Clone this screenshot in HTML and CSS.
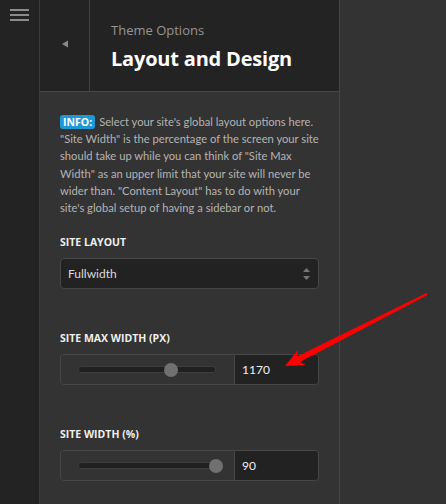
FILE: index.html
```html
<!DOCTYPE html>
<html lang="en">
<head>
<meta charset="utf-8">
<title>Theme Options – Layout and Design</title>
<link rel="stylesheet" href="styles.css">
</head>
<body>
<div class="app">
  <aside class="rail">
    <button class="menu" aria-label="Menu"><span></span><span></span><span></span></button>
  </aside>

  <section class="panel">
    <header class="panel-head">
      <button class="back" aria-label="Back">
        <svg width="8" height="8" viewBox="0 0 8 8"><path d="M7 0.5 L7 7.5 L1 4 Z" fill="#8a8a8a"/></svg>
      </button>
      <div class="titles">
        <div class="eyebrow">Theme Options</div>
        <h1>Layout and Design</h1>
      </div>
    </header>

    <div class="panel-body">
      <div class="info">
        <span class="badge">INFO:</span>
        <p class="info-text">Select your site's global layout options here. "Site Width" is the percentage of the screen your site should take up while you can think of "Site Max Width" as an upper limit that your site will never be wider than. "Content Layout" has to do with your site's global setup of having a sidebar or not.</p>
      </div>

      <div class="field">
        <div class="label">Site Layout</div>
        <div class="select">
          <span>Fullwidth</span>
          <svg width="9" height="14" viewBox="0 0 9 14"><path d="M4.5 1 L8 5 L1 5 Z M1 9 L8 9 L4.5 13 Z" fill="#767676"/></svg>
        </div>
      </div>

      <div class="field">
        <div class="label">Site Max Width (px)</div>
        <div class="range">
          <div class="slider">
            <div class="track"><div class="thumb" style="left: 67.4%"></div></div>
          </div>
          <div class="value">1170</div>
        </div>
      </div>

      <div class="field">
        <div class="label">Site Width (%)</div>
        <div class="range">
          <div class="slider">
            <div class="track"><div class="thumb" style="left: 100%"></div></div>
          </div>
          <div class="value">90</div>
        </div>
      </div>
    </div>
  </section>

  <div class="canvas"></div>
</div>

<svg class="pointer" width="446" height="504" viewBox="0 0 446 504">
  <polygon points="285,366 298.1,349.8 297.0,356.4 426.5,293.1 427.5,294.9 299.9,361.9 305.8,365" fill="#ff0000"/>
</svg>
</body>
</html>
```

FILE: styles.css
```css
* { box-sizing: border-box; }

html, body {
  margin: 0;
  height: 100%;
  background: #333333;
}

body {
  font-family: "Open Sans", "Noto Sans", sans-serif;
  color: #b4b4b4;
  overflow: hidden;
}

.app {
  display: flex;
  height: 504px;
}

/* left icon rail */
.rail {
  width: 40px;
  flex: none;
  background: #232323;
  border-right: 1px solid #3a3a3a;
}

.menu {
  display: flex;
  flex-direction: column;
  gap: 3px;
  width: 40px;
  padding: 9px 10px 0 10px;
  margin: 0;
  border: 0;
  background: none;
}

.menu span {
  display: block;
  width: 19px;
  height: 2px;
  background: #8c8c8c;
}

/* options panel */
.panel {
  width: 300px;
  flex: none;
  display: flex;
  flex-direction: column;
  background: #333333;
  border-right: 1px solid #454545;
}

.panel-head {
  display: flex;
  height: 92px;
  flex: none;
  background: #232323;
  border-bottom: 1px solid #474747;
}

.back {
  width: 50px;
  flex: none;
  display: flex;
  align-items: center;
  justify-content: center;
  padding: 0 0 3px 0;
  margin: 0;
  border: 0;
  border-right: 1px solid #3f3f3f;
  background: none;
}

.titles {
  padding: 21px 0 0 21px;
}

.eyebrow {
  font-size: 13px;
  line-height: 18px;
  color: #959595;
}

h1 {
  margin: 7px 0 0 0;
  font-size: 20px;
  line-height: 26px;
  font-weight: 700;
  color: #ffffff;
  letter-spacing: -0.2px;
}

.panel-body {
  padding: 21px 20px 0 20px;
}

/* the badge floats into the first line of the note */
.info {
  font-family: Lato, "Open Sans", sans-serif;
  font-size: 11.2px;
  line-height: 17.2px;
  color: #b4b4b4;
}

.info-text {
  margin: 0;
}

.badge {
  float: left;
  margin: 1.5px 4px 0 0;
  padding: 0 3px;
  line-height: 14px;
  border-radius: 3px;
  background: #1f98d6;
  color: #ffffff;
  font-family: "Open Sans", sans-serif;
  font-size: 10.5px;
  font-weight: 700;
}

.field {
  margin-top: 19px;
}

.field + .field {
  margin-top: 42px;
}

.label {
  font-size: 10.5px;
  line-height: 14px;
  font-weight: 700;
  text-transform: uppercase;
  color: #efefef;
  margin-bottom: 9px;
}

.select {
  display: flex;
  align-items: center;
  justify-content: space-between;
  height: 31px;
  padding: 0 7px 0 7px;
  background: #222222;
  border: 1px solid #464646;
  border-radius: 4px;
  font-family: Lato, "Open Sans", sans-serif;
  font-size: 12px;
  color: #dcdcdc;
}

.range {
  display: flex;
  height: 31px;
  border: 1px solid #474747;
  border-radius: 4px;
  overflow: hidden;
}

.slider {
  width: 174px;
  flex: none;
  display: flex;
  align-items: center;
  padding: 0 18px 0 17px;
  border-right: 1px solid #474747;
  background: #333333;
}

.track {
  position: relative;
  flex: 1;
  height: 7px;
  border-radius: 4px;
  background: #202020;
  box-shadow: inset 0 0 0 1px #3d3d3d;
}

/* thumb sits over the track at the value's position */
.thumb {
  position: absolute;
  top: 50%;
  width: 14px;
  height: 14px;
  border-radius: 50%;
  background: #707070;
  transform: translate(-50%, -50%);
}

.value {
  flex: 1;
  display: flex;
  align-items: center;
  padding-left: 7px;
  background: #222222;
  font-family: Lato, "Open Sans", sans-serif;
  font-size: 12px;
  color: #f0f0f0;
}

.canvas {
  flex: 1;
  background: #333333;
}

/* annotation arrow drawn over the page */
.pointer {
  position: absolute;
  left: 0;
  top: 0;
  pointer-events: none;
}
```
